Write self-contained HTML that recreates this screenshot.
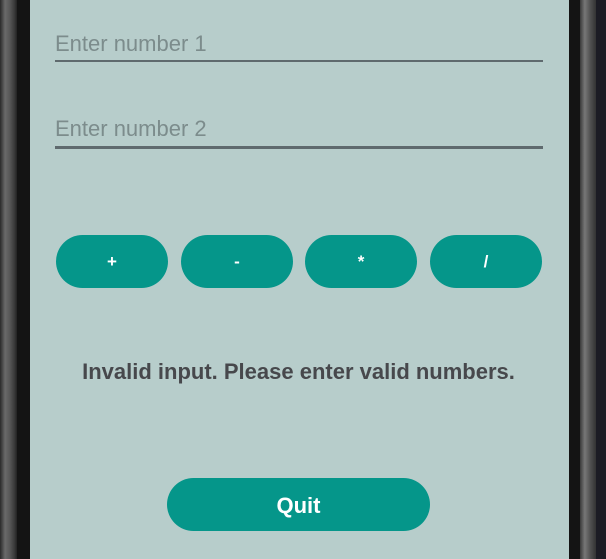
<!DOCTYPE html>
<html><head><style>
body{margin:0;width:606px;height:559px;overflow:hidden;background:#1a1a1e;position:relative;font-family:"Liberation Sans",Roboto,sans-serif}
.l1{position:absolute;left:0;top:0;width:17px;height:559px;background:linear-gradient(90deg,#2a2a2a,#6a6a6a 30%,#555 60%,#3a3a3a 85%,#222)}
.l2{position:absolute;left:17px;top:0;width:13px;height:559px;background:#141414}
.scr{position:absolute;left:30px;top:0;width:539px;height:559px;background:#b7cdcb}
.r1{position:absolute;left:569px;top:0;width:11px;height:559px;background:#141414}
.r2{position:absolute;left:580px;top:0;width:16px;height:559px;background:linear-gradient(90deg,#3a3a3a,#777 30%,#555 60%,#333)}
.r3{position:absolute;left:596px;top:0;width:10px;height:559px;background:#1c1c24}
.in{position:absolute;left:55px;width:488px;font-size:22px;color:#7c8c8c}
.in span{position:absolute;left:0}
.in i{position:absolute;left:0;width:488px;background:#5f6a6e}
.b{position:absolute;top:235px;width:112px;height:53px;border-radius:27px;background:#05968a;color:#fff;font-size:17px;font-weight:bold;text-align:center;line-height:53px}
</style></head><body>
<div class="l1"></div><div class="l2"></div><div class="scr"></div><div class="r1"></div><div class="r2"></div><div class="r3"></div>
<div class="in" style="top:0"><span style="top:31px">Enter number 1</span><i style="top:60px;height:2px"></i></div>
<div class="in" style="top:0"><span style="top:116px">Enter number 2</span><i style="top:146px;height:3px"></i></div>
<div class="b" style="left:56px">+</div>
<div class="b" style="left:181px">-</div>
<div class="b" style="left:305px">*</div>
<div class="b" style="left:430px">/</div>
<div style="position:absolute;left:30px;width:569px;top:359px;text-align:center;font-size:22px;font-weight:bold;color:#47484c;left:14px">Invalid input. Please enter valid numbers.</div>
<div style="position:absolute;left:167px;top:478px;width:263px;height:53px;border-radius:27px;background:#05968a;color:#fff;font-size:22px;font-weight:bold;text-align:center;line-height:55px">Quit</div>
</body></html>
